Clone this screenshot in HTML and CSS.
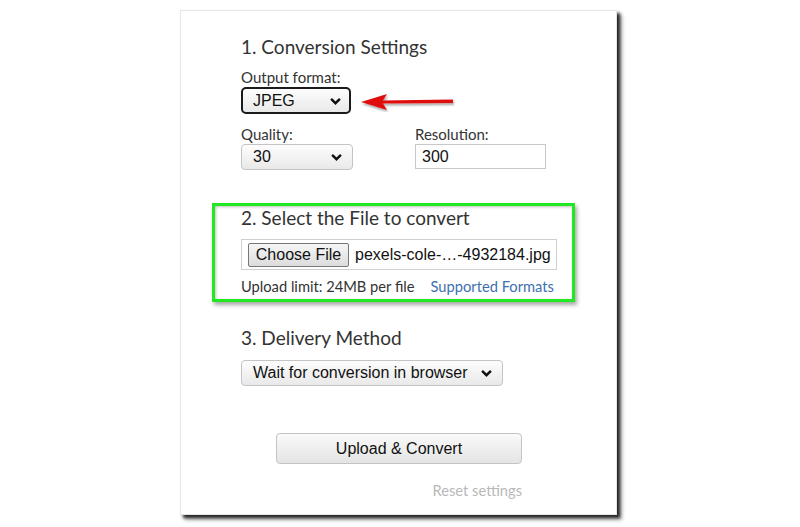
FILE: index.html
```html
<!DOCTYPE html>
<html>
<head>
<meta charset="utf-8">
<link rel="stylesheet" href="styles.css">
</head>
<body>
<div class="card">
  <section class="sec sec1">
    <h2 class="title">1. Conversion Settings</h2>
    <div class="label">Output format:</div>
    <div class="fmt-wrap">
      <div class="ctl sel sel-fmt"><span>JPEG</span><svg class="chev" viewBox="0 0 10 6"><path d="M1 1l4 4 4-4" fill="none" stroke="#111" stroke-width="2.2"/></svg></div>
      <svg class="arrow" viewBox="0 0 100 20" width="100" height="20">
        <defs><filter id="sh" x="-10%" y="-50%" width="130%" height="220%"><feDropShadow dx="1" dy="2" stdDeviation="1" flood-color="#000" flood-opacity="0.35"/></filter></defs>
        <g filter="url(#sh)">
          <path d="M22 8.5 L94 7.5 L94 11 L22 11.5 Z" fill="#e01010"/>
          <path d="M2 10 L28 2 L23 10 L28 18 Z" fill="#e01010"/>
        </g>
      </svg>
    </div>
    <div class="row">
      <div class="col col-q">
        <div class="label">Quality:</div>
        <div class="ctl sel sel-q"><span>30</span><svg class="chev" viewBox="0 0 10 6"><path d="M1 1l4 4 4-4" fill="none" stroke="#111" stroke-width="2.2"/></svg></div>
      </div>
      <div class="col">
        <div class="label">Resolution:</div>
        <div class="ctl inp">300</div>
      </div>
    </div>
  </section>
  <section class="sec sec2">
    <h2 class="title">2. Select the File to convert</h2>
    <div class="file">
      <div class="btn-file">Choose File</div>
      <span class="fname">pexels-cole-…-4932184.jpg</span>
    </div>
    <div class="limit"><span>Upload limit: 24MB per file</span><a class="link">Supported Formats</a></div>
  </section>
  <section class="sec sec3">
    <h2 class="title">3. Delivery Method</h2>
    <div class="ctl sel sel-d"><span>Wait for conversion in browser</span><svg class="chev" viewBox="0 0 10 6"><path d="M1 1l4 4 4-4" fill="none" stroke="#111" stroke-width="2.2"/></svg></div>
  </section>
  <div class="actions">
    <div class="btn-main">Upload &amp; Convert</div>
    <div class="reset">Reset settings</div>
  </div>
</div>
</body>
</html>
```
FILE: styles.css
```css
html, body { margin: 0; padding: 0; background: #fff; }
body { width: 800px; height: 527px; overflow: hidden; }
.card {
  position: relative;
  margin: 10px 0 0 180px;
  width: 437px;
  height: 505px;
  box-sizing: border-box;
  border: 1px solid #e6e6e6;
  background: #fff;
  box-shadow: 3px 3px 3px rgba(0,0,0,0.8), 5px 5px 4px rgba(0,0,0,0.3);
  padding: 24px 0 0 60px;
  font-family: Lato, "Open Sans", sans-serif;
  color: #333;
}
.title {
  margin: 0;
  font-weight: 400;
  font-size: 19px;
  line-height: 23px;
  color: #333;
}
.label {
  font-size: 15px;
  line-height: 18px;
  color: #333;
}
.sec1 .label { margin-top: 10px; }
.ctl {
  box-sizing: border-box;
  font-family: "Liberation Sans", Arial, sans-serif;
  font-size: 16px;
  color: #111;
  display: flex;
  align-items: center;
}
.sel {
  background: linear-gradient(#fdfdfd, #e9e9e9);
  border: 1px solid #c4c4c4;
  border-radius: 4px;
  padding: 0 10px 0 11px;
  justify-content: space-between;
}
.chev { width: 11px; height: 8px; }
.fmt-wrap { display: flex; align-items: center; margin-top: 1px; }
.sel-fmt {
  width: 110px; height: 27px;
  border: 2px solid #1a1a1a;
  border-radius: 5px;
  padding: 0 8px 0 10px;
}
.arrow { margin-left: 8px; margin-top: 2px; }
.row { display: flex; margin-top: 11px; }
.col-q { width: 174px; }
.row .label { margin-top: 0; margin-bottom: 1px; }
.sel-q { width: 112px; height: 26px; }
.inp {
  width: 131px; height: 25px;
  border: 1px solid #c8c8c8;
  padding: 0 6px;
  margin-top: 1px;
}
.sec2 {
  margin: 33px 0 0 -29px;
  width: 363px;
  box-sizing: border-box;
  border: 3px solid #22e822;
  padding: 0 0 4px 26px;
  box-shadow: 2px 3px 4px rgba(0,0,0,0.35), inset 1px 1px 3px rgba(0,0,0,0.25);
}
.file {
  margin-top: 10px;
  width: 316px; height: 31px;
  box-sizing: border-box;
  border: 1px solid #d0d0d0;
  display: flex; align-items: center;
  padding-left: 6px;
  font-family: "Liberation Sans", Arial, sans-serif;
  font-size: 16px;
  color: #111;
}
.btn-file {
  width: 101px; height: 24px; box-sizing: border-box;
  border: 1px solid #777;
  border-radius: 2px;
  background: linear-gradient(#f6f6f6, #dcdcdc);
  display: flex; align-items: center; justify-content: center;
  margin-right: 6px;
}
.limit {
  display: flex;
  margin-top: 7px;
  font-size: 14.7px;
  line-height: 18px;
  color: #333;
}
.link { margin-left: 16px; color: #3e6fb0; }
.sec3 { margin-top: 24px; }
.sel-d { width: 262px; height: 26px; margin-top: 11px; }
.actions {
  width: 281px;
  display: flex; flex-direction: column; align-items: flex-end;
  margin-top: 47px;
}
.btn-main {
  width: 246px; height: 31px; box-sizing: border-box;
  border: 1px solid #c4c4c4;
  border-radius: 4px;
  background: linear-gradient(#fafafa, #e4e4e4);
  font-family: "Liberation Sans", Arial, sans-serif;
  font-size: 16px;
  color: #111;
  display: flex; align-items: center; justify-content: center;
}
.reset {
  margin-top: 17px;
  font-size: 14.7px;
  line-height: 18px;
  color: #b8b8b8;
}
```
